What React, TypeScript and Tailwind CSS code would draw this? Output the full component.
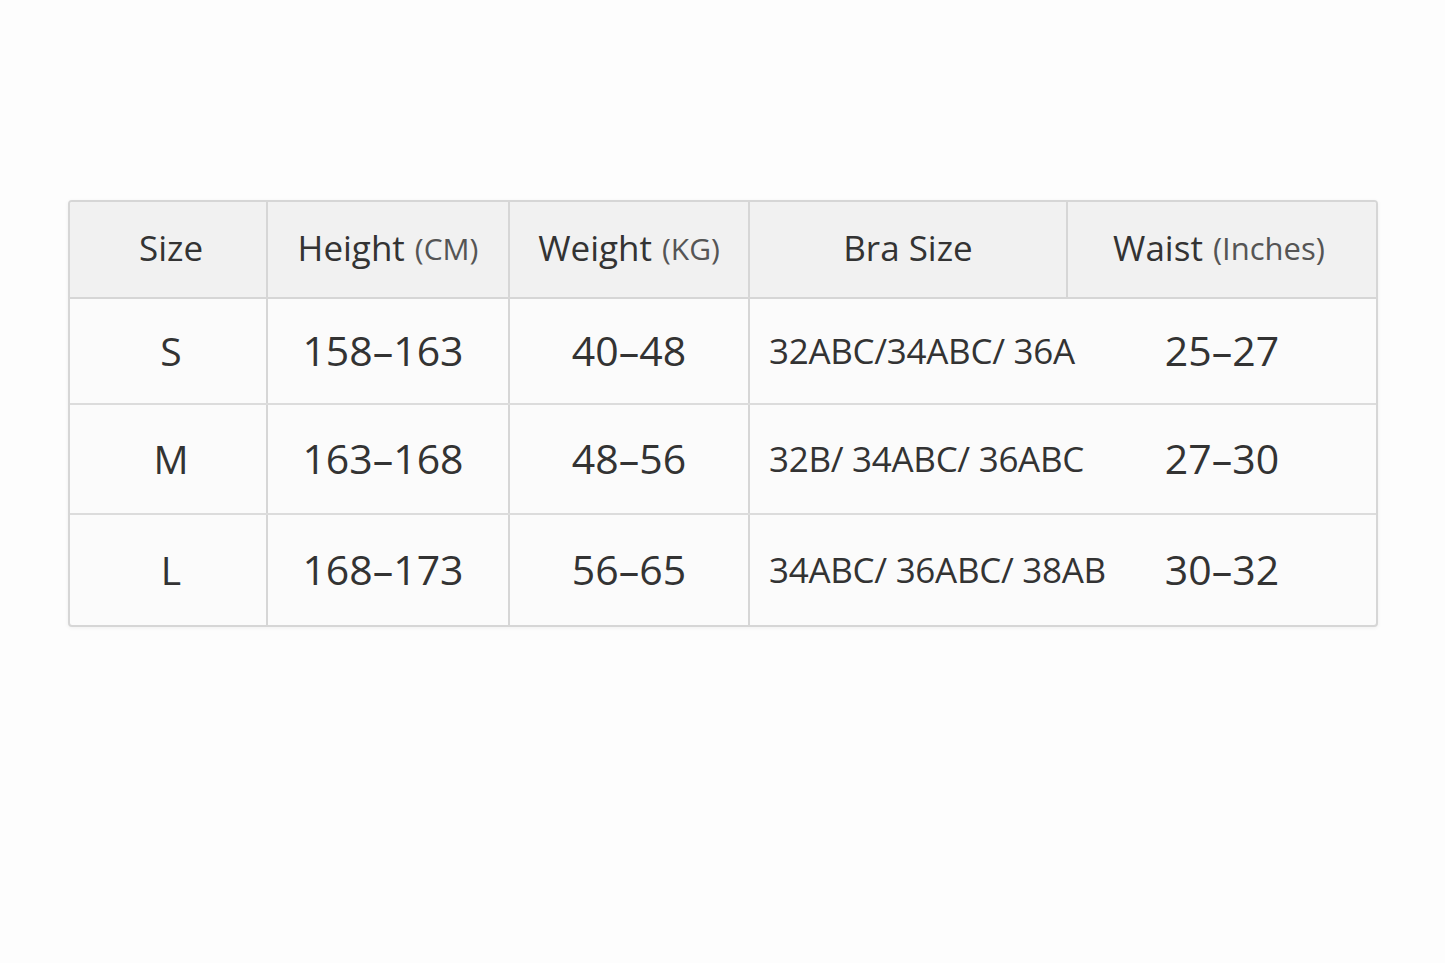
const rows = [
  { size: "S", height: "158–163", weight: "40–48", bra: "32ABC/34ABC/ 36A", waist: "25–27" },
  { size: "M", height: "163–168", weight: "48–56", bra: "32B/ 34ABC/ 36ABC", waist: "27–30" },
  { size: "L", height: "168–173", weight: "56–65", bra: "34ABC/ 36ABC/ 38AB", waist: "30–32" },
];

const heights = ["h-[106px]", "h-[110px]", "h-[110px]"];

export default function App() {
  return (
    <div
      className="min-h-screen w-full bg-[#fdfdfd] pt-[200px] pl-[68px] text-[#333]"
      style={{ fontFamily: '"Open Sans", "Noto Sans", sans-serif' }}
    >
      <div className="w-[1310px] rounded-[4px] border-2 border-[#d6d6d6] bg-[#fbfbfb] shadow-[0_1px_4px_rgba(0,0,0,0.06)] overflow-hidden">
        <div className="grid grid-cols-[198px_242px_240px_318px_1fr] h-[97px] bg-[#f1f1f1] border-b-2 border-[#d6d6d6] text-[35px]">
          <div className="flex items-center justify-center pl-[6px] pb-[3px] border-r-2 border-[#d6d6d6]">Size</div>
          <div className="flex items-center justify-center gap-[10px] pb-[3px] border-r-2 border-[#d6d6d6]">
            Height <span className="text-[30px] text-[#555]">(CM)</span>
          </div>
          <div className="flex items-center justify-center gap-[10px] pb-[3px] border-r-2 border-[#d6d6d6]">
            Weight <span className="text-[30px] text-[#555]">(KG)</span>
          </div>
          <div className="flex items-center justify-center pb-[3px] border-r-2 border-[#d6d6d6]">Bra Size</div>
          <div className="flex items-center justify-center gap-[10px] pb-[3px] pr-[6px]">
            Waist <span className="text-[31px] text-[#555]">(Inches)</span>
          </div>
        </div>
        {rows.map((r, i) => (
          <div
            key={r.size}
            className={`grid grid-cols-[198px_242px_240px_318px_1fr] ${heights[i]} ${i < rows.length - 1 ? "border-b-2 border-[#dcdcdc]" : ""}`}
          >
            <div className="flex items-center justify-center pl-[6px] border-r-2 border-[#d6d6d6] text-[39px]">{r.size}</div>
            <div className="flex items-center justify-center pr-[10px] border-r-2 border-[#d6d6d6] text-[41px]">{r.height}</div>
            <div className="flex items-center justify-center border-r-2 border-[#d6d6d6] text-[41px]">{r.weight}</div>
            <div className="flex items-center pl-[19px] text-[35px] tracking-[-0.3px] whitespace-nowrap">{r.bra}</div>
            <div className="flex items-center justify-center text-[41px]">{r.waist}</div>
          </div>
        ))}
      </div>
    </div>
  );
}
